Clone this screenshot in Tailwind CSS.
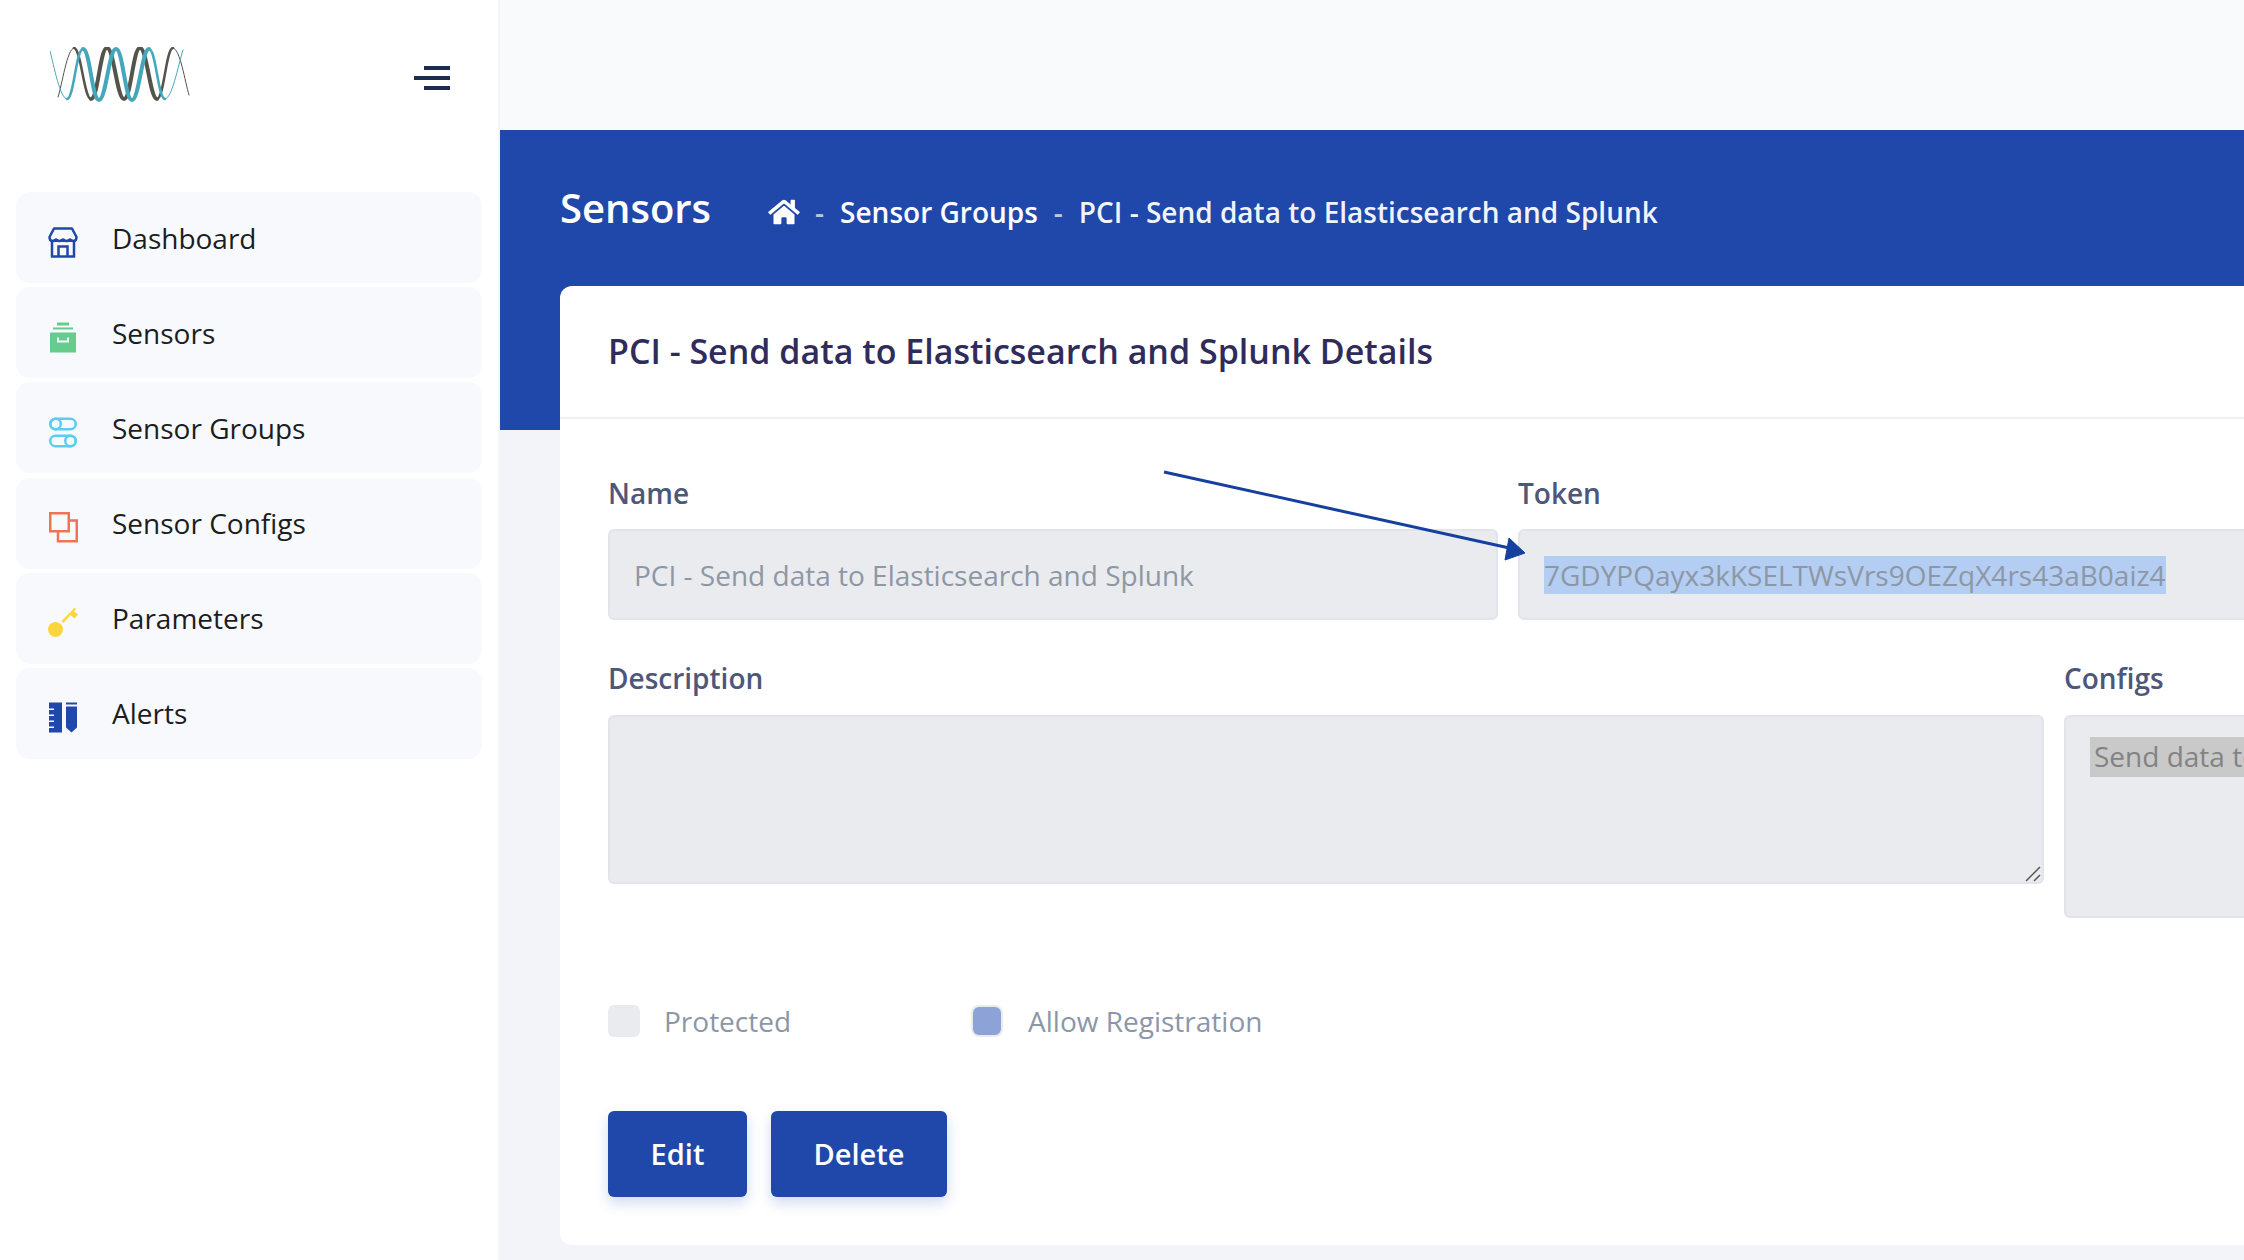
<!DOCTYPE html>
<html lang="en">
  <head>
    <meta charset="UTF-8" />
    <script src="https://cdn.jsdelivr.net/npm/@tailwindcss/browser@4"></script>
    <title>Sensors</title>
  </head>

  <body class="font-['Open_Sans',sans-serif] overflow-hidden">
    <div class="relative flex w-[2244px] h-[1260px] overflow-hidden bg-[#f2f4f9]">
      <!-- sidebar -->
      <aside class="w-[500px] shrink-0 bg-white border-r-2 border-[#f4f5f9] z-10">
        <div class="flex justify-between items-start h-[192px] pl-[50px] pr-[48px]">
          <svg class="mt-[47px]" width="140" height="56" viewBox="50 47 140 56" fill="none" stroke-linecap="round">
            <g stroke="#55544c">
              <path stroke-width="1" d="M58 97C62 86 67 48 74 48" />
              <path stroke-width="2.5" d="M74 48C81 48 84 99 91 99" />
              <path stroke-width="4" d="M91 99C98 99 100 48 107 48C114 48 117 99 124 99C131 99 133 48 140 48C147 48 150 99 157 99" />
              <path stroke-width="2.5" d="M157 99C164 99 166 48 173 48" />
              <path stroke-width="1" d="M173 48C180 48 185 82 189 95" />
            </g>
            <g stroke="#45a7bb">
              <path stroke-width="1" d="M50 51C54 66 60 99 67 99" />
              <path stroke-width="2.5" d="M67 99C74 99 76 49 83 49" />
              <path stroke-width="4" d="M83 49C90 49 92 100 99 100C106 100 109 49 116 49C123 49 125 100 132 100C139 100 142 49 149 49" />
              <path stroke-width="2.5" d="M149 49C156 49 158 99 165 99" />
              <path stroke-width="1" d="M165 99C172 99 178 66 183 50" />
            </g>
          </svg>
          <div class="mt-[66px] flex flex-col items-end gap-[6px]">
            <div class="w-[26px] h-[4px] bg-[#1c2b52]"></div>
            <div class="w-[36px] h-[4px] bg-[#1c2b52]"></div>
            <div class="w-[26px] h-[4px] bg-[#1c2b52]"></div>
          </div>
        </div>
        <nav class="flex flex-col gap-[4.2px] px-[16px] text-[28px] text-[#1b1d21]">
          <a class="flex items-center h-[91px] pl-[31px] rounded-[14px] bg-[#f8f9fd]">
            <svg class="mt-[8px]" width="32" height="32" viewBox="0 0 32 32" fill="none" stroke="#2047aa" stroke-width="2.500">
              <path d="M7 2.500H25L29.500 11C29.500 14 28 15 26.500 15C24.500 15 23 13.500 23 13.500C23 13.500 21.500 15 19.500 15C17.500 15 16 13.500 16 13.500C16 13.500 14.500 15 12.500 15C10.500 15 9 13.500 9 13.500C9 13.500 7.500 15 5.500 15C4 15 2.500 14 2.500 11Z" stroke-linejoin="round" />
              <path d="M5 14V30.500H27V14M11.500 30.500V20.500H20.500V30.500" />
            </svg>
            <span class="ml-[33px]">Dashboard</span>
          </a>
          <a class="flex items-center h-[91px] pl-[31px] rounded-[14px] bg-[#f8f9fd]">
            <svg class="mt-[8px]" width="32" height="32" viewBox="0 0 32 32" fill="#66cc8e">
              <path d="M10 1.500H22V4.500H10ZM6 6.500H26V8.500H6ZM3 11.500H29V31.500H3Z" />
              <path d="M10 16.500H12V19.500H20V16.500H22V21.500H10Z" fill="#f8f9fd" />
            </svg>
            <span class="ml-[33px]">Sensors</span>
          </a>
          <a class="flex items-center h-[91px] pl-[31px] rounded-[14px] bg-[#f8f9fd]">
            <svg class="mt-[8px]" width="32" height="32" viewBox="0 0 32 32" fill="none" stroke="#5bcdf0" stroke-width="2.500">
              <rect x="3.250" y="2.750" width="25.500" height="10.500" rx="5.250" />
              <rect x="3.250" y="19.750" width="25.500" height="10.500" rx="5.250" />
              <circle cx="8.500" cy="8" r="5.250" />
              <circle cx="23.500" cy="25" r="5.250" />
            </svg>
            <span class="ml-[33px]">Sensor Groups</span>
          </a>
          <a class="flex items-center h-[91px] pl-[31px] rounded-[14px] bg-[#f8f9fd]">
            <svg class="mt-[8px]" width="32" height="32" viewBox="0 0 32 32" fill="none" stroke="#ef7455" stroke-width="2.500">
              <path d="M3.250 2.250H21.750V20.250H3.250Z" />
              <path d="M21.750 9.500H29.750V30.250H11V20.250" />
            </svg>
            <span class="ml-[33px]">Sensor Configs</span>
          </a>
          <a class="flex items-center h-[91px] pl-[31px] rounded-[14px] bg-[#f8f9fd]">
            <svg class="mt-[8px]" width="32" height="32" viewBox="0 0 32 32" fill="#fad53f">
              <circle cx="8.500" cy="23.500" r="7.500" />
              <path d="M14.500 15L25 4.500L27.500 1.500L29 3L27 5.500L31 8.500L27.500 12.500L23.500 9L16.500 17Z" />
            </svg>
            <span class="ml-[33px]">Parameters</span>
          </a>
          <a class="flex items-center h-[91px] pl-[31px] rounded-[14px] bg-[#f8f9fd]">
            <svg class="mt-[8px]" width="32" height="32" viewBox="0 0 32 32" fill="#2047aa">
              <path d="M2 1.500H15V31.500H2V27H7V25.500H2V21H7V19.500H2V15H7V13.500H2V9H7V7.500H2Z" />
              <path d="M19 1.500H30V3.500H19ZM19 5.500H30V26.500L24.500 31.500L19 26.500Z" />
            </svg>
            <span class="ml-[33px]">Alerts</span>
          </a>
        </nav>
      </aside>

      <!-- main -->
      <main class="flex-1 min-w-0 flex flex-col">
        <div class="h-[130px] shrink-0 bg-[#f9fafc]"></div>
        <div class="h-[300px] shrink-0 bg-[#2047aa] pl-[60px] pt-[55px] text-white">
          <div class="flex items-center h-[46px]">
            <h1 class="text-[40px] font-semibold">Sensors</h1>
            <div class="flex items-center ml-[57px] mt-[8px] text-[28px] font-semibold">
              <svg width="32" height="28" viewBox="0 0 576 512" fill="white">
                <path d="M280.37 148.26L96 300.11V464a16 16 0 0 0 16 16l112.06-.29a16 16 0 0 0 15.92-16V368a16 16 0 0 1 16-16h64a16 16 0 0 1 16 16v95.64a16 16 0 0 0 16 16.05L464 480a16 16 0 0 0 16-16V300L295.67 148.26a12.19 12.19 0 0 0-15.3 0zM571.6 251.47L488 182.56V44.05a12 12 0 0 0-12-12h-56a12 12 0 0 0-12 12v72.61L318.47 43a48 48 0 0 0-61 0L4.34 251.47a12 12 0 0 0-1.6 16.9l25.5 31A12 12 0 0 0 45.15 301l235.22-193.74a12.19 12.19 0 0 1 15.3 0L530.9 301a12 12 0 0 0 16.9-1.6l25.5-31a12 12 0 0 0-1.7-16.93z" />
              </svg>
              <span class="ml-[15px] text-white/70">-</span>
              <span class="ml-[16px]">Sensor Groups</span>
              <span class="ml-[16px] text-white/70">-</span>
              <span class="ml-[16px] text-white/95">PCI - Send data to Elasticsearch and Splunk</span>
            </div>
          </div>
        </div>
        <section class="-mt-[144px] ml-[60px] w-[1800px] h-[959px] shrink-0 rounded-[12px] bg-white">
          <div class="h-[133px] pl-[48px] pt-[40px] border-b-2 border-[#f0f1f4]">
            <h2 class="text-[34px] font-semibold text-[#2f2c5c]">PCI - Send data to Elasticsearch and Splunk Details</h2>
          </div>
          <div class="pl-[48px]">
            <div class="flex gap-[20px] mt-[56px]">
              <div class="w-[890px] shrink-0">
                <label class="block h-[54px] text-[28px] leading-[36px] font-semibold text-[#4d5779]">Name</label>
                <div class="h-[91px] pl-[24px] flex items-center border-2 border-[#e1e4ea] rounded-[6px] bg-[#e9ebef] text-[28px] text-[#8e97a4]">PCI - Send data to Elasticsearch and Splunk</div>
              </div>
              <div class="w-[800px] shrink-0">
                <label class="block h-[54px] text-[28px] leading-[36px] font-semibold text-[#4d5779]">Token</label>
                <div class="h-[91px] pl-[24px] flex items-center border-2 border-[#e1e4ea] rounded-[6px] bg-[#e9ebef] text-[28px] text-[#8e97a4]">
                  <span class="bg-[#b3cdf3] leading-[38px]">7GDYPQayx3kKSELTWsVrs9OEZqX4rs43aB0aiz4</span>
                </div>
              </div>
            </div>
            <div class="flex gap-[20px] mt-[40px]">
              <div class="w-[1436px] shrink-0">
                <label class="block h-[55px] text-[28px] leading-[36px] font-semibold text-[#4d5779]">Description</label>
                <div class="relative h-[169px]">
                  <textarea readonly class="block w-full h-full resize-none border-2 border-[#e1e4ea] rounded-[6px] bg-[#e9ebef]"></textarea>
                  <svg class="absolute right-[3px] bottom-[2px]" width="16" height="16" viewBox="0 0 16 16" stroke="#555" stroke-width="1.500">
                    <path d="M1 15L15 1M9 15L15 9" />
                  </svg>
                </div>
              </div>
              <div class="w-[600px] shrink-0">
                <label class="block h-[55px] text-[28px] leading-[36px] font-semibold text-[#4d5779]">Configs</label>
                <div class="h-[203px] pl-[24px] pt-[20px] border-2 border-[#e1e4ea] rounded-[6px] bg-[#e9ebef] text-[28px] text-[#838383]">
                  <div class="bg-[#c9c9c9] h-[40px] leading-[38px] px-[4px] whitespace-nowrap">Send data to Elasticsearch</div>
                </div>
              </div>
            </div>
            <div class="flex items-center h-[32px] mt-[87px] text-[28px] text-[#8b97a8]">
              <div class="w-[32px] h-[32px] rounded-[6px] bg-[#e9ebef]"></div>
              <span class="ml-[24px]">Protected</span>
              <div class="ml-[180px] w-[32px] h-[32px] rounded-[8px] border-2 border-[#e9ebef] bg-[#8da2d6]"></div>
              <span class="ml-[25px]">Allow Registration</span>
            </div>
            <div class="flex gap-[24px] mt-[74px]">
              <button class="w-[139px] h-[86px] rounded-[6px] bg-[#2047aa] text-[29px] font-semibold text-white shadow-[0_6px_14px_rgba(32,71,170,0.2)]">Edit</button>
              <button class="w-[176px] h-[86px] rounded-[6px] bg-[#2047aa] text-[29px] font-semibold text-white shadow-[0_6px_14px_rgba(32,71,170,0.2)]">Delete</button>
            </div>
          </div>
        </section>
      </main>

      <!-- annotation arrow drawn on the screenshot -->
      <svg class="absolute left-[1150px] top-[460px] z-20" width="390" height="110" viewBox="1150 460 390 110" fill="#16409f" stroke="#16409f">
        <path d="M1164 472L1514 549" stroke-width="3" />
        <path d="M1509 538L1525 553L1505 560Z" stroke-width="1" />
      </svg>
    </div>
  </body>
</html>
